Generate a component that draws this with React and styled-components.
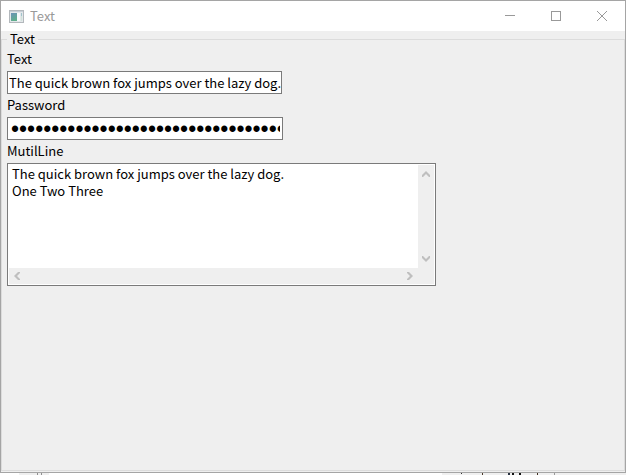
import React from "react";
import { useRef, useState } from "react";
import styled, { createGlobalStyle } from "styled-components";

const SENTENCE = "The quick brown fox jumps over the lazy dog.";

const arrows = {
  up: "M0 5 L4 1 L8 5 V7 H7 L4 4 L1 7 H0 Z",
  down: "M0 3 L4 7 L8 3 V1 H7 L4 4 L1 1 H0 Z",
  left: "M5 0 L1 4 L5 8 H7 V7 L4 4 L7 1 V0 Z",
  right: "M3 0 L7 4 L3 8 H1 V7 L4 4 L1 1 V0 Z",
};

const Arrow = ({ dir, onClick }) => (
  <ScrollButton type="button" aria-label={`Scroll ${dir}`} onClick={onClick}>
    <svg width="8" height="8" viewBox="0 0 8 8" fill="#bfbfbf">
      <path d={arrows[dir]} />
    </svg>
  </ScrollButton>
);

const AppIcon = () => (
  <svg width="15" height="13" viewBox="0 0 15 13" aria-hidden="true">
    <defs>
      <linearGradient id="pane" x1="0" y1="0" x2="0.4" y2="1">
        <stop offset="0" stopColor="#6b92b8" />
        <stop offset="1" stopColor="#5fae8c" />
      </linearGradient>
    </defs>
    <rect x="0.5" y="0.5" width="14" height="12" fill="#e3e7ea" stroke="#b3b8bc" />
    <rect x="1" y="1" width="13" height="1" fill="#c6ced6" />
    <rect x="2" y="3" width="6" height="8" fill="url(#pane)" />
    <rect x="8" y="3" width="3" height="8" fill="#f7fafc" />
    <rect x="12" y="3" width="1" height="3" fill="#9fc3cc" />
    <rect x="12" y="6" width="1" height="5" fill="#cfe3d8" />
  </svg>
);

// slivers of the windows behind this one
const Behind = () => (
  <svg width="626" height="2" viewBox="0 0 626 2" aria-hidden="true">
    <rect x="19" width="30" height="2" fill="#efefef" />
    <rect x="37" width="1" height="2" fill="#8f8f8f" />
    <rect x="41" width="1" height="2" fill="#8f8f8f" />
    <rect x="442" width="184" height="2" fill="#f0f0f0" />
    <rect x="461" width="1" height="1" fill="#333333" />
    <rect x="482" width="1" height="2" fill="#4b3a2a" />
    <rect x="508" width="2" height="2" fill="#26303f" />
    <rect x="512" width="2" height="2" fill="#111111" />
    <rect x="519" width="2" height="2" fill="#111111" />
    <rect x="537" width="1" height="2" fill="#3f2f20" />
    <rect x="554" width="1" height="2" fill="#999999" />
  </svg>
);

const App = () => {
  const area = useRef(null);
  const [text, setText] = useState(SENTENCE);
  const [password, setPassword] = useState(SENTENCE);
  const [lines, setLines] = useState(`${SENTENCE}\nOne Two Three`);

  const scroll = (x, y) => () => area.current.scrollBy(x, y);

  return (
    <Desktop>
      <GlobalStyle />
      <Window>
        <TitleBar>
          <AppIcon />
          <Title>Text</Title>
          <CaptionButton type="button" aria-label="Minimize">
            <svg width="11" height="11" viewBox="0 0 11 11" stroke="#999999">
              <path d="M0 4.5 H10" />
            </svg>
          </CaptionButton>
          <CaptionButton type="button" aria-label="Maximize">
            <svg width="11" height="11" viewBox="0 0 11 11" fill="none" stroke="#999999">
              <rect x="0.5" y="0.5" width="9" height="9" />
            </svg>
          </CaptionButton>
          <CaptionButton type="button" aria-label="Close">
            <svg width="11" height="11" viewBox="0 0 11 11" stroke="#999999">
              <path d="M0 0 L10 10 M10 0 L0 10" />
            </svg>
          </CaptionButton>
        </TitleBar>
        <Group>
          <Legend>Text</Legend>
          <Label htmlFor="text">Text</Label>
          <Input id="text" type="text" value={text} onChange={(e) => setText(e.target.value)} />
          <Label htmlFor="password">Password</Label>
          <PasswordInput
            id="password"
            type="password"
            value={password}
            onChange={(e) => setPassword(e.target.value)}
          />
          <Label htmlFor="lines">MutilLine</Label>
          <MultiLine>
            <TextArea
              id="lines"
              ref={area}
              wrap="off"
              spellCheck="false"
              value={lines}
              onChange={(e) => setLines(e.target.value)}
            />
            <VerticalBar>
              <Arrow dir="up" onClick={scroll(0, -17)} />
              <Arrow dir="down" onClick={scroll(0, 17)} />
            </VerticalBar>
            <HorizontalBar>
              <Arrow dir="left" onClick={scroll(-17, 0)} />
              <Arrow dir="right" onClick={scroll(17, 0)} />
            </HorizontalBar>
            <Corner />
          </MultiLine>
        </Group>
      </Window>
      <Behind />
    </Desktop>
  );
};
export default App;

const GlobalStyle = createGlobalStyle`
  * {
    box-sizing: border-box;
  }

  body {
    margin: 0;
    background-color: #ffffff;
    color: #000000;
    font: 13px/17px "Noto Sans CJK SC", sans-serif;
  }
`;

const Desktop = styled.div`
  display: flex;
  flex-direction: column;
  height: 100vh;
  overflow: hidden;
`;

const Window = styled.main`
  flex: 1;
  display: flex;
  flex-direction: column;
  border: 1px solid #a5a5a5;
  background-color: #efefef;
`;

const TitleBar = styled.header`
  display: flex;
  align-items: center;
  height: 30px;
  padding-left: 8px;
  background-color: #ffffff;
`;

const Title = styled.h1`
  flex: 1;
  margin: 0;
  padding: 0 0 2px 6px;
  color: #999999;
  font-size: 13px;
  font-weight: normal;
`;

const CaptionButton = styled.button`
  display: flex;
  align-items: center;
  justify-content: center;
  width: 46px;
  height: 30px;
  padding: 0;
  border: 0;
  background: transparent;
`;

const Group = styled.fieldset`
  flex: 1;
  min-width: 0;
  margin: 0 0 1px;
  padding: 0 5px;
  border: 1px solid #dcdcdc;
`;

const Legend = styled.legend`
  padding: 0 3px 2px;
  line-height: 15px;
`;

const Label = styled.label`
  display: block;
  padding-bottom: 2px;
  line-height: 21px;
`;

const Input = styled.input`
  display: block;
  width: 275px;
  max-width: 100%;
  height: 23px;
  padding: 0 0 1px 1px;
  border: 1px solid #7a7a7a;
  outline: none;
  background-color: #ffffff;
  color: #000000;
  font: inherit;
`;

const PasswordInput = styled(Input)`
  width: 276px;
  padding: 2px 2px 0 3px;
  font-family: "Liberation Sans", Arial, sans-serif;
  font-size: 23px;
  line-height: 21px;
`;

const MultiLine = styled.div`
  display: grid;
  grid-template: 103px 16px / 1fr 16px;
  width: 429px;
  max-width: 100%;
  padding: 1px;
  border: 1px solid #7a7a7a;
  background-color: #ffffff;
`;

const TextArea = styled.textarea`
  width: 100%;
  height: 100%;
  padding: 0 3px;
  border: 0;
  outline: none;
  resize: none;
  overflow: hidden;
  background-color: #ffffff;
  color: #000000;
  font: inherit;
`;

const VerticalBar = styled.div`
  display: flex;
  flex-direction: column;
  justify-content: space-between;
  background-color: #efefef;
`;

const HorizontalBar = styled(VerticalBar)`
  flex-direction: row;
`;

const Corner = styled.div`
  background-color: #efefef;
`;

const ScrollButton = styled.button`
  display: flex;
  align-items: center;
  justify-content: center;
  width: 16px;
  height: 16px;
  padding: 0;
  border: 0;
  background: transparent;

  ${VerticalBar} > & {
    height: 18px;
  }

  ${HorizontalBar} > & {
    width: 16px;
    height: 16px;
  }
`;
